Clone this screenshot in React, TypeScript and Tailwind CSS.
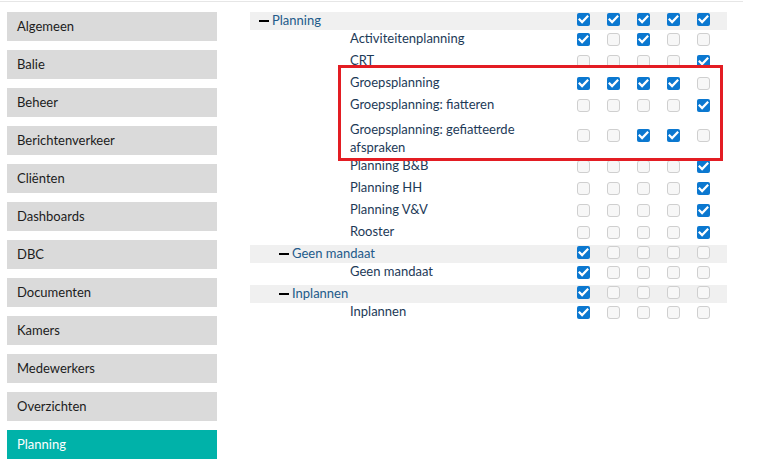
import React from 'react';

// Sidebar menu items
const menu = [
	'Algemeen',
	'Balie',
	'Beheer',
	'Berichtenverkeer',
	'Cliënten',
	'Dashboards',
	'DBC',
	'Documenten',
	'Kamers',
	'Medewerkers',
	'Overzichten',
	'Planning'
];

type Row = {
	label: string;
	header?: boolean;
	level?: number;
	tall?: boolean;
	checks: number[];
};

// Rights table rows
const rows: Row[] = [
	{ label: 'Planning', header: true, level: 0, checks: [1, 1, 1, 1, 1] },
	{ label: 'Activiteitenplanning', checks: [1, 0, 1, 0, 0] },
	{ label: 'CRT', checks: [0, 0, 0, 0, 1] },
	{ label: 'Groepsplanning', checks: [1, 1, 1, 1, 0] },
	{ label: 'Groepsplanning: fiatteren', checks: [0, 0, 0, 0, 1] },
	{ label: 'Groepsplanning: gefiatteerde afspraken', tall: true, checks: [0, 0, 1, 1, 0] },
	{ label: 'Planning B&B', checks: [0, 0, 0, 0, 1] },
	{ label: 'Planning HH', checks: [0, 0, 0, 0, 1] },
	{ label: 'Planning V&V', checks: [0, 0, 0, 0, 1] },
	{ label: 'Rooster', checks: [0, 0, 0, 0, 1] },
	{ label: 'Geen mandaat', header: true, level: 1, checks: [1, 0, 0, 0, 0] },
	{ label: 'Geen mandaat', checks: [1, 0, 0, 0, 0] },
	{ label: 'Inplannen', header: true, level: 1, checks: [1, 0, 0, 0, 0] },
	{ label: 'Inplannen', checks: [1, 0, 0, 0, 0] }
];

function Checkbox({ checked }: { checked: boolean }) {
	if (checked) {
		return (
			<div className="w-[13px] h-[13px] rounded-[2px] bg-[#0b78d0] flex items-center justify-center">
				<svg width="13" height="13" viewBox="0 0 13 13">
					<path d="M2.6 6.6 L5.1 9.1 L10.4 3.6" fill="none" stroke="#fff" strokeWidth="2.2" strokeLinecap="square" />
				</svg>
			</div>
		);
	}
	return <div className="w-[13px] h-[13px] rounded-[3px] bg-[#f7f7f7] border border-[#cfcfcf]"></div>;
}

function TableRow({ row }: { row: Row }) {
	if (row.header) {
		return (
			<div className="flex h-[18px] bg-[#f0f0f0]">
				<div className={`w-[319px] flex items-start ${row.level === 0 ? 'pl-[9px]' : 'pl-[29px]'}`}>
					<span className="w-[10px] h-[2px] bg-black mt-[8px] mr-[3px]"></span>
					<span className="text-[13px] leading-[18px] -mt-[1px] text-[#225a8a]">{row.label}</span>
				</div>
				{row.checks.map((c, i) => (
					<div key={i} className="w-[30px] pl-[8px] pt-[1px]">
						<Checkbox checked={c === 1} />
					</div>
				))}
			</div>
		);
	}

	return (
		<div className={`flex ${row.tall ? 'h-[39px] items-center' : 'h-[22px] items-start'}`}>
			<div className="w-[319px] pl-[100px]">
				<div className={`text-[13px] leading-[18px] text-[#1d3a57] max-w-[200px] ${row.tall ? '' : '-mt-[1px]'}`}>
					{row.label}
				</div>
			</div>
			{row.checks.map((c, i) => (
				<div key={i} className={`w-[30px] pl-[8px] ${row.tall ? '-mt-[4px]' : 'pt-[3px]'}`}>
					<Checkbox checked={c === 1} />
				</div>
			))}
		</div>
	);
}

export default function App() {
	return (
		<div className="w-[767px] h-[462px] bg-white overflow-hidden" style={{ fontFamily: 'Lato, "Open Sans", sans-serif' }}>
			<div className="h-px mt-px w-[743px] bg-[#e6e6e6]"></div>

			<div className="flex pl-[7px] pt-[10px] gap-[33px]">
				{/* Sidebar */}
				<div className="w-[210px] flex flex-col gap-[9px]">
					{menu.map((item) => (
						<div
							key={item}
							className={`h-[29px] flex items-center pl-[10px] text-[13px] ${
								item === 'Planning' ? 'bg-[#00b2a9] text-white' : 'bg-[#dadada] text-[#1c1c1c]'
							}`}
						>
							{item}
						</div>
					))}
				</div>

				{/* Rights table */}
				<div className="relative w-[477px] flex flex-col">
					{rows.map((row, i) => (
						<TableRow key={i} row={row} />
					))}
					<div className="absolute left-[88px] top-[53px] w-[385px] h-[96px] border-[3px] border-[#e31d23]"></div>
				</div>
			</div>
		</div>
	);
}
